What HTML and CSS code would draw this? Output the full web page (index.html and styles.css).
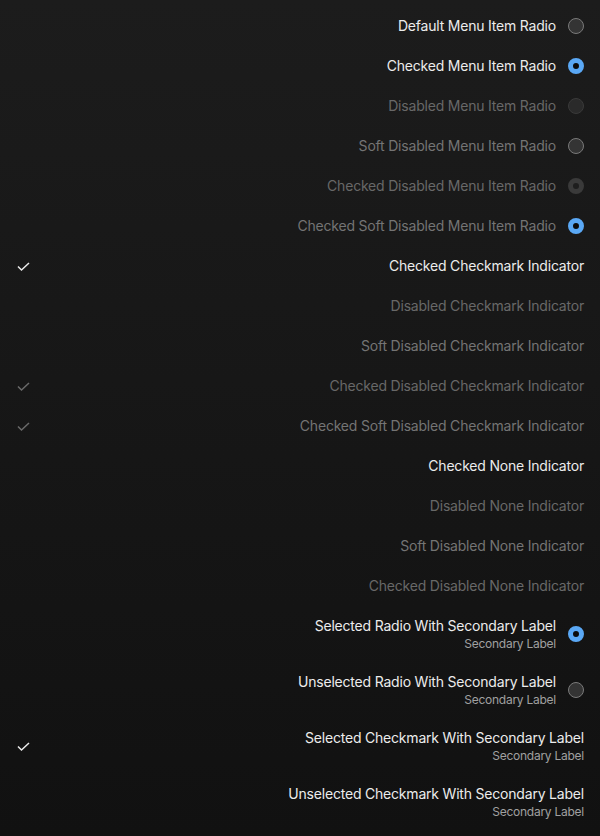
FILE: index.html
```html
<!DOCTYPE html>
<html>
<head>
<meta charset="utf-8">
<link rel="stylesheet" href="styles.css">
</head>
<body>
<div class="menu">
  <div class="row"><span class="label">Default Menu Item Radio</span><span class="radio"></span></div>
  <div class="row"><span class="label">Checked Menu Item Radio</span><span class="radio checked"></span></div>
  <div class="row disabled"><span class="label">Disabled Menu Item Radio</span><span class="radio dis"></span></div>
  <div class="row soft"><span class="label">Soft Disabled Menu Item Radio</span><span class="radio"></span></div>
  <div class="row disabled"><span class="label">Checked Disabled Menu Item Radio</span><span class="radio dis-checked"></span></div>
  <div class="row soft"><span class="label">Checked Soft Disabled Menu Item Radio</span><span class="radio checked"></span></div>
  <div class="row check"><span class="mark"><svg width="16" height="12" viewBox="0 0 16 12"><path d="M2 6.5 L5.5 10 L13 3" fill="none" stroke="currentColor" stroke-width="1.5"/></svg></span><span class="label">Checked Checkmark Indicator</span></div>
  <div class="row check disabled"><span class="mark"></span><span class="label">Disabled Checkmark Indicator</span></div>
  <div class="row check soft"><span class="mark"></span><span class="label">Soft Disabled Checkmark Indicator</span></div>
  <div class="row check disabled"><span class="mark"><svg width="16" height="12" viewBox="0 0 16 12"><path d="M2 6.5 L5.5 10 L13 3" fill="none" stroke="currentColor" stroke-width="1.5"/></svg></span><span class="label">Checked Disabled Checkmark Indicator</span></div>
  <div class="row check soft"><span class="mark"><svg width="16" height="12" viewBox="0 0 16 12"><path d="M2 6.5 L5.5 10 L13 3" fill="none" stroke="currentColor" stroke-width="1.5"/></svg></span><span class="label">Checked Soft Disabled Checkmark Indicator</span></div>
  <div class="row check"><span class="mark"></span><span class="label">Checked None Indicator</span></div>
  <div class="row check disabled"><span class="mark"></span><span class="label">Disabled None Indicator</span></div>
  <div class="row check soft"><span class="mark"></span><span class="label">Soft Disabled None Indicator</span></div>
  <div class="row check disabled"><span class="mark"></span><span class="label">Checked Disabled None Indicator</span></div>
  <div class="row tall"><span class="labels"><span class="label">Selected Radio With Secondary Label</span><span class="sub">Secondary Label</span></span><span class="radio checked"></span></div>
  <div class="row tall"><span class="labels"><span class="label">Unselected Radio With Secondary Label</span><span class="sub">Secondary Label</span></span><span class="radio"></span></div>
  <div class="row tall check"><span class="mark"><svg width="16" height="12" viewBox="0 0 16 12"><path d="M2 6.5 L5.5 10 L13 3" fill="none" stroke="currentColor" stroke-width="1.5"/></svg></span><span class="labels"><span class="label">Selected Checkmark With Secondary Label</span><span class="sub">Secondary Label</span></span></div>
  <div class="row tall check"><span class="mark"></span><span class="labels"><span class="label">Unselected Checkmark With Secondary Label</span><span class="sub">Secondary Label</span></span></div>
</div>
</body>
</html>
```

FILE: styles.css
```css
html, body {
  margin: 0;
  height: 100%;
}
body {
  background: linear-gradient(180deg, #1c1c1c 0%, #111111 100%);
  font-family: Inter, "Noto Sans", sans-serif;
  font-size: 14px;
  color: #ececec;
  overflow: hidden;
}
.menu {
  display: flex;
  flex-direction: column;
  padding: 5px 16px 7px 16px;
}
.row {
  height: 40px;
  display: flex;
  align-items: center;
  justify-content: flex-end;
  gap: 12px;
}
.row.tall {
  height: 56px;
}
.row.check {
  justify-content: space-between;
}
.row.check .mark {
  margin-top: 1px;
}
.row .radio {
  margin-top: 1px;
}
.label {
  white-space: nowrap;
  line-height: 17px;
  letter-spacing: -0.2px;
}
.labels {
  display: flex;
  flex-direction: column;
  align-items: flex-end;
  padding-top: 3px;
}
.sub {
  font-size: 12px;
  line-height: 16px;
  margin-top: 2px;
  letter-spacing: -0.25px;
  color: #a0a0a0;
}
.row.disabled { color: #686868; }
.row.soft { color: #747474; }
.mark {
  width: 16px;
  height: 12px;
  display: flex;
  color: #ececec;
}
.row.disabled .mark, .row.soft .mark { color: #6a6a6a; }
.radio {
  width: 16px;
  height: 16px;
  box-sizing: border-box;
  border-radius: 50%;
  border: 1px solid #7a7a7a;
  background: #343434;
  flex: none;
}
.radio.checked {
  border: 5px solid #5aa8f5;
  background: #0c0c0c;
}
.radio.dis {
  border-color: #3a3a3a;
  background: #2a2a2a;
}
.radio.dis-checked {
  border: 5px solid #3a3a3a;
  background: #1e1e1e;
}
```
